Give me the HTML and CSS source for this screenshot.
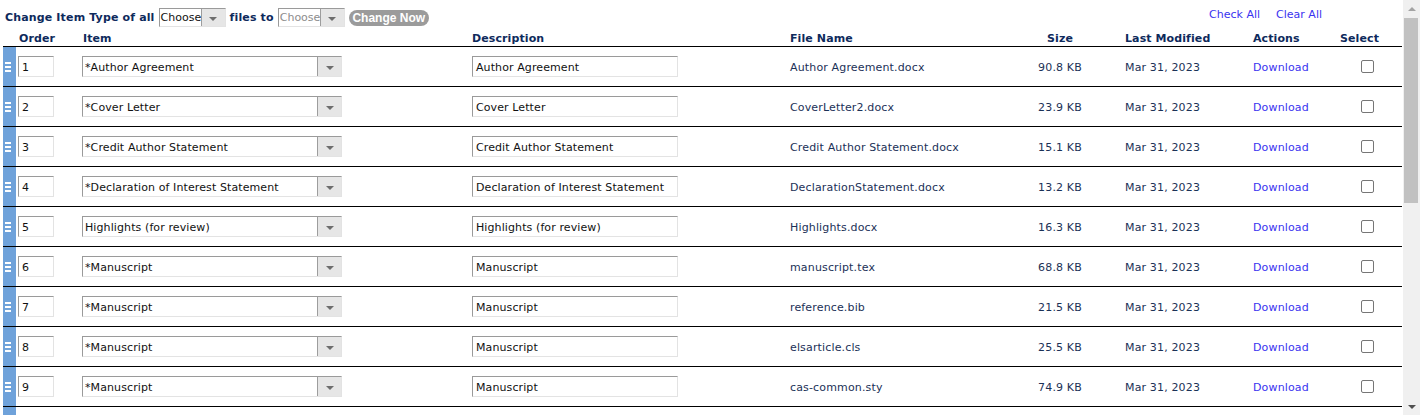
FILE: index.html
```html
<!DOCTYPE html>
<html lang="en">
<head>
<meta charset="utf-8">
<title>Attach Files</title>
<link rel="stylesheet" href="styles.css">
</head>
<body>
<div class="page">
  <div class="main">
    <div class="toolbar">
      <span class="label">Change Item Type of all</span>
      <span class="fsel fsel-top"><span class="fsel-val">Choose</span><span class="fsel-btn"><span class="tri"></span></span></span>
      <span class="label">files to</span>
      <span class="fsel fsel-top fsel-dis"><span class="fsel-val">Choose</span><span class="fsel-btn"><span class="tri"></span></span></span>
      <button class="btn-change" type="button">Change Now</button>
      <span class="links"><a class="lnk" href="#">Check All</a><a class="lnk" href="#">Clear All</a></span>
    </div>
    <table class="files">
      <colgroup>
        <col class="c-handle"><col class="c-order"><col class="c-item"><col class="c-desc"><col class="c-file"><col class="c-size"><col class="c-date"><col class="c-act"><col class="c-sel">
      </colgroup>
      <thead>
        <tr>
          <th></th><th class="h-order">Order</th><th class="h-item">Item</th><th>Description</th><th>File Name</th><th class="t-center">Size</th><th class="h-date">Last Modified</th><th>Actions</th><th class="h-sel">Select</th>
        </tr>
      </thead>
      <tbody>
        <tr>
          <td class="handle"><span class="grip"></span></td>
          <td><span class="tb order">1</span></td>
          <td><span class="fsel fsel-row"><span class="fsel-val">*Author Agreement</span><span class="fsel-btn"><span class="tri"></span></span></span></td>
          <td><span class="tb desc">Author Agreement</span></td>
          <td class="d-txt">Author Agreement.docx</td>
          <td class="d-txt t-center">90.8 KB</td>
          <td class="d-txt d-date">Mar 31, 2023</td>
          <td class="d-txt d-act"><a class="lnk" href="#">Download</a></td>
          <td class="d-sel"><input class="cb" type="checkbox"></td>
        </tr>
        <tr>
          <td class="handle"><span class="grip"></span></td>
          <td><span class="tb order">2</span></td>
          <td><span class="fsel fsel-row"><span class="fsel-val">*Cover Letter</span><span class="fsel-btn"><span class="tri"></span></span></span></td>
          <td><span class="tb desc">Cover Letter</span></td>
          <td class="d-txt">CoverLetter2.docx</td>
          <td class="d-txt t-center">23.9 KB</td>
          <td class="d-txt d-date">Mar 31, 2023</td>
          <td class="d-txt d-act"><a class="lnk" href="#">Download</a></td>
          <td class="d-sel"><input class="cb" type="checkbox"></td>
        </tr>
        <tr>
          <td class="handle"><span class="grip"></span></td>
          <td><span class="tb order">3</span></td>
          <td><span class="fsel fsel-row"><span class="fsel-val">*Credit Author Statement</span><span class="fsel-btn"><span class="tri"></span></span></span></td>
          <td><span class="tb desc">Credit Author Statement</span></td>
          <td class="d-txt">Credit Author Statement.docx</td>
          <td class="d-txt t-center">15.1 KB</td>
          <td class="d-txt d-date">Mar 31, 2023</td>
          <td class="d-txt d-act"><a class="lnk" href="#">Download</a></td>
          <td class="d-sel"><input class="cb" type="checkbox"></td>
        </tr>
        <tr>
          <td class="handle"><span class="grip"></span></td>
          <td><span class="tb order">4</span></td>
          <td><span class="fsel fsel-row"><span class="fsel-val">*Declaration of Interest Statement</span><span class="fsel-btn"><span class="tri"></span></span></span></td>
          <td><span class="tb desc">Declaration of Interest Statement</span></td>
          <td class="d-txt">DeclarationStatement.docx</td>
          <td class="d-txt t-center">13.2 KB</td>
          <td class="d-txt d-date">Mar 31, 2023</td>
          <td class="d-txt d-act"><a class="lnk" href="#">Download</a></td>
          <td class="d-sel"><input class="cb" type="checkbox"></td>
        </tr>
        <tr>
          <td class="handle"><span class="grip"></span></td>
          <td><span class="tb order">5</span></td>
          <td><span class="fsel fsel-row"><span class="fsel-val">Highlights (for review)</span><span class="fsel-btn"><span class="tri"></span></span></span></td>
          <td><span class="tb desc">Highlights (for review)</span></td>
          <td class="d-txt">Highlights.docx</td>
          <td class="d-txt t-center">16.3 KB</td>
          <td class="d-txt d-date">Mar 31, 2023</td>
          <td class="d-txt d-act"><a class="lnk" href="#">Download</a></td>
          <td class="d-sel"><input class="cb" type="checkbox"></td>
        </tr>
        <tr>
          <td class="handle"><span class="grip"></span></td>
          <td><span class="tb order">6</span></td>
          <td><span class="fsel fsel-row"><span class="fsel-val">*Manuscript</span><span class="fsel-btn"><span class="tri"></span></span></span></td>
          <td><span class="tb desc">Manuscript</span></td>
          <td class="d-txt">manuscript.tex</td>
          <td class="d-txt t-center">68.8 KB</td>
          <td class="d-txt d-date">Mar 31, 2023</td>
          <td class="d-txt d-act"><a class="lnk" href="#">Download</a></td>
          <td class="d-sel"><input class="cb" type="checkbox"></td>
        </tr>
        <tr>
          <td class="handle"><span class="grip"></span></td>
          <td><span class="tb order">7</span></td>
          <td><span class="fsel fsel-row"><span class="fsel-val">*Manuscript</span><span class="fsel-btn"><span class="tri"></span></span></span></td>
          <td><span class="tb desc">Manuscript</span></td>
          <td class="d-txt">reference.bib</td>
          <td class="d-txt t-center">21.5 KB</td>
          <td class="d-txt d-date">Mar 31, 2023</td>
          <td class="d-txt d-act"><a class="lnk" href="#">Download</a></td>
          <td class="d-sel"><input class="cb" type="checkbox"></td>
        </tr>
        <tr>
          <td class="handle"><span class="grip"></span></td>
          <td><span class="tb order">8</span></td>
          <td><span class="fsel fsel-row"><span class="fsel-val">*Manuscript</span><span class="fsel-btn"><span class="tri"></span></span></span></td>
          <td><span class="tb desc">Manuscript</span></td>
          <td class="d-txt">elsarticle.cls</td>
          <td class="d-txt t-center">25.5 KB</td>
          <td class="d-txt d-date">Mar 31, 2023</td>
          <td class="d-txt d-act"><a class="lnk" href="#">Download</a></td>
          <td class="d-sel"><input class="cb" type="checkbox"></td>
        </tr>
        <tr>
          <td class="handle"><span class="grip"></span></td>
          <td><span class="tb order">9</span></td>
          <td><span class="fsel fsel-row"><span class="fsel-val">*Manuscript</span><span class="fsel-btn"><span class="tri"></span></span></span></td>
          <td><span class="tb desc">Manuscript</span></td>
          <td class="d-txt">cas-common.sty</td>
          <td class="d-txt t-center">74.9 KB</td>
          <td class="d-txt d-date">Mar 31, 2023</td>
          <td class="d-txt d-act"><a class="lnk" href="#">Download</a></td>
          <td class="d-sel"><input class="cb" type="checkbox"></td>
        </tr>
        <tr class="row-tail">
          <td class="handle"></td>
          <td></td><td></td><td></td><td></td><td></td><td></td><td></td><td></td>
        </tr>
      </tbody>
    </table>
  </div>
  <div class="scrollbar">
    <div class="sb-arrow"><span class="sb-up"></span></div>
    <div class="sb-thumb"></div>
    <div class="sb-track"></div>
    <div class="sb-arrow"><span class="sb-down"></span></div>
  </div>
</div>
</body>
</html>
```

FILE: styles.css
```css
html, body {
  margin: 0;
  padding: 0;
  background: #ffffff;
}
body {
  font-family: "DejaVu Sans", Verdana, sans-serif;
  font-size: 11px;
  letter-spacing: 0.15px;
  color: #1b3157;
  overflow: hidden;
}
.page {
  display: flex;
  height: 415px;
  overflow: hidden;
}
.main {
  flex: 1;
  min-width: 0;
}
.toolbar {
  display: flex;
  align-items: center;
  height: 30px;
  padding: 0 81px 0 5px;
  box-sizing: border-box;
}
.label {
  font-weight: bold;
  color: #0e2a5c;
  margin-right: 4px;
  padding-top: 5px;
}
.fsel {
  display: inline-flex;
  box-sizing: border-box;
  border-top: 1px solid #9a9a9a;
  border-left: 1px solid #9a9a9a;
  border-right: 1px solid #e3e3e3;
  border-bottom: 1px solid #e3e3e3;
  background: #fff;
  color: #111;
  white-space: nowrap;
  overflow: hidden;
  letter-spacing: 0.1px;
}
.fsel-top {
  width: 67px;
  height: 19px;
  margin-right: 4px;
  margin-top: 5px;
}
.fsel-dis .fsel-val {
  color: #8d8d8d;
}
.fsel-row {
  width: 260px;
  height: 21px;
  vertical-align: middle;
}
.fsel-val {
  flex: 1;
  min-width: 0;
  padding-left: 2px;
  padding-top: 2px;
  line-height: 17px;
  overflow: hidden;
}
.fsel-top .fsel-val {
  padding-left: 1px;
  padding-top: 0;
  line-height: 18px;
  letter-spacing: 0;
}
.fsel-btn {
  width: 23px;
  flex: none;
  border-left: 1px solid #9d9d9d;
  background: #e6e6e6;
  display: flex;
  align-items: center;
  justify-content: center;
}
.tri {
  width: 0;
  height: 0;
  border-left: 4px solid transparent;
  border-right: 4px solid transparent;
  border-top: 4px solid #6d6d6d;
  margin-top: 3px;
}
.btn-change {
  margin-left: 0;
  margin-top: 5px;
  height: 16px;
  width: 80px;
  padding: 0;
  border: none;
  border-radius: 8px;
  background: #9b9b9b;
  color: #ffffff;
  font-family: "Liberation Sans", Arial, sans-serif;
  font-weight: bold;
  font-size: 12px;
  letter-spacing: 0;
  line-height: 16px;
}
.links {
  margin-left: auto;
  display: flex;
  gap: 16px;
  margin-top: -2px;
  letter-spacing: 0;
}
.lnk {
  color: #3a33f0;
  text-decoration: none;
}
.files {
  margin-left: 3px;
  width: 1399px;
  table-layout: fixed;
  border-collapse: collapse;
}
.c-handle { width: 13px; }
.c-order { width: 66px; }
.c-item { width: 390px; }
.c-desc { width: 318px; }
.c-file { width: 210px; }
.c-size { width: 120px; }
.c-date { width: 133px; }
.c-act { width: 77px; }
.c-sel { width: 72px; }
.files th {
  text-align: left;
  font-weight: bold;
  color: #0e2a5c;
  height: 16px;
  padding: 0;
  line-height: 14px;
  vertical-align: bottom;
  white-space: nowrap;
  letter-spacing: 0.1px;
}
.files thead tr {
  border-bottom: 1px solid #000;
}
.files tbody tr {
  height: 40px;
  border-bottom: 1px solid #000;
}
.files td {
  padding: 0;
  white-space: nowrap;
  vertical-align: middle;
}
.files td.d-txt {
  padding-top: 1px;
}
.h-order { padding-left: 3px !important; }
.h-item { padding-left: 1px !important; }
.h-date { padding-left: 5px !important; }
.files td.d-date { padding-left: 5px; }
.h-sel { padding-left: 10px !important; }
.t-center { text-align: center !important; }
.files td.d-act { padding-left: 0; }
.files td.handle {
  background: #6fa2da;
  padding: 0;
  text-align: left;
}
.grip {
  display: block;
  width: 6px;
  height: 10px;
  margin-left: 2px;
  margin-top: 1px;
  background: linear-gradient(#fff 0 2px, transparent 2px 4px, #fff 4px 6px, transparent 6px 8px, #fff 8px 10px);
}
.tb {
  display: inline-block;
  box-sizing: border-box;
  height: 21px;
  line-height: 17px;
  padding-top: 2px;
  padding-left: 3px;
  border-top: 1px solid #9a9a9a;
  border-left: 1px solid #9a9a9a;
  border-right: 1px solid #e3e3e3;
  border-bottom: 1px solid #e3e3e3;
  color: #111;
  vertical-align: middle;
  overflow: hidden;
  letter-spacing: 0.1px;
}
.order {
  width: 36px;
  margin-left: 2px;
}
.desc {
  width: 206px;
}
.files td.d-sel {
  padding-left: 31px;
}
.cb {
  appearance: none;
  -webkit-appearance: none;
  width: 13px;
  height: 13px;
  margin: 0;
  border: 1px solid #767676;
  border-radius: 2px;
  background: #fff;
  vertical-align: middle;
  display: block;
}
.scrollbar {
  width: 17px;
  flex: none;
  background: #f0f0f0;
  display: flex;
  flex-direction: column;
}
.sb-arrow {
  height: 17px;
  display: flex;
  align-items: center;
  justify-content: center;
  flex: none;
}
.sb-up {
  width: 0;
  height: 0;
  border-left: 4px solid transparent;
  border-right: 4px solid transparent;
  border-bottom: 4px solid #a3a3a3;
}
.sb-down {
  width: 0;
  height: 0;
  border-left: 4px solid transparent;
  border-right: 4px solid transparent;
  border-top: 4px solid #505050;
}
.sb-thumb {
  height: 185px;
  margin: 1px 2px 0 1px;
  background: #c1c1c1;
  flex: none;
}
.sb-track {
  flex: 1;
}
```
